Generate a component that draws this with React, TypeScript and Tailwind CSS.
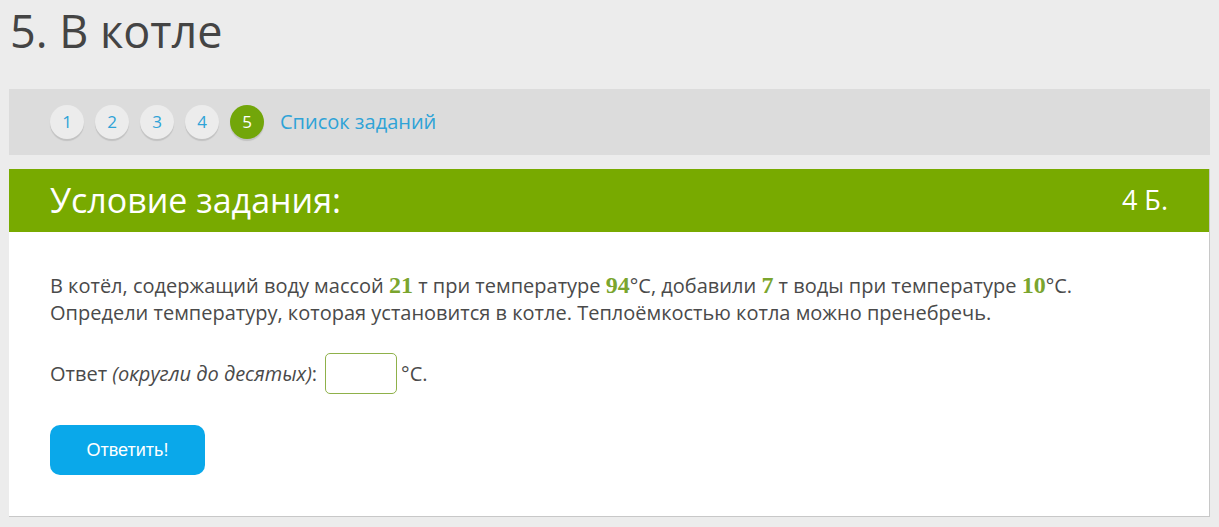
import React from 'react';

const Num: React.FC<{ children: React.ReactNode }> = ({ children }) => (
  <span className="text-[24px] leading-none font-bold text-[#7aa52e] font-['Liberation_Serif',serif]">
    {children}
  </span>
);

export default function App() {
  const pages = ['1', '2', '3', '4'];
  return (
    <div className="w-[1219px] h-[527px] overflow-hidden bg-[#ececec] font-['Open_Sans',sans-serif] text-[#444]">
      <h1 className="pl-[10px] text-[45px] leading-[62px] text-[#444]">5. В котле</h1>

      <div className="mt-[27px] mx-[9px] h-[66px] bg-[#dcdcdc] flex items-center pl-[41px] gap-[11px]">
        {pages.map((p) => (
          <div
            key={p}
            className="w-[34px] h-[34px] rounded-full bg-[#ececec] shadow-[0_2px_1px_rgba(0,0,0,0.12)] flex items-center justify-center text-[17px] text-[#2fa3d7]"
          >
            {p}
          </div>
        ))}
        <div className="w-[34px] h-[34px] rounded-full bg-[#72a60a] shadow-[0_2px_1px_rgba(0,0,0,0.12)] flex items-center justify-center text-[17px] text-white">
          5
        </div>
        <span className="ml-[5px] text-[20px] text-[#2fa3d7]">Список заданий</span>
      </div>

      <div className="mt-[14px] mx-[9px] bg-white border-r border-b border-[#c8c8c8]">
        <div className="h-[63px] bg-[#78aa00] flex items-center justify-between pl-[41px] pr-[41px] text-white">
          <span className="text-[34px]">Условие задания:</span>
          <span className="text-[27px]">4 Б.</span>
        </div>
        <div className="pl-[41px] pt-[40px] pb-[41px] text-[20px] leading-[27px] text-[#4a4a4a]">
          <p>
            В котёл, содержащий воду массой <Num>21</Num> т при температуре <Num>94</Num>°C, добавили <Num>7</Num> т воды при
            температуре <Num>10</Num>°C.
            <br />
            Определи температуру, которая установится в котле. Теплоёмкостью котла можно пренебречь.
          </p>
          <div className="mt-[27px] flex items-center">
            <span>
              Ответ <i>(округли до десятых)</i>:
            </span>
            <div className="ml-[8px] w-[72px] h-[41px] rounded-[5px] border border-[#8fb14a] bg-white" />
            <span className="ml-[4px]">°C.</span>
          </div>
          <button className="mt-[31px] w-[155px] h-[50px] rounded-[10px] bg-[#0aa8ea] text-white text-[18px] font-['Liberation_Sans',sans-serif]">
            Ответить!
          </button>
        </div>
      </div>
    </div>
  );
}
